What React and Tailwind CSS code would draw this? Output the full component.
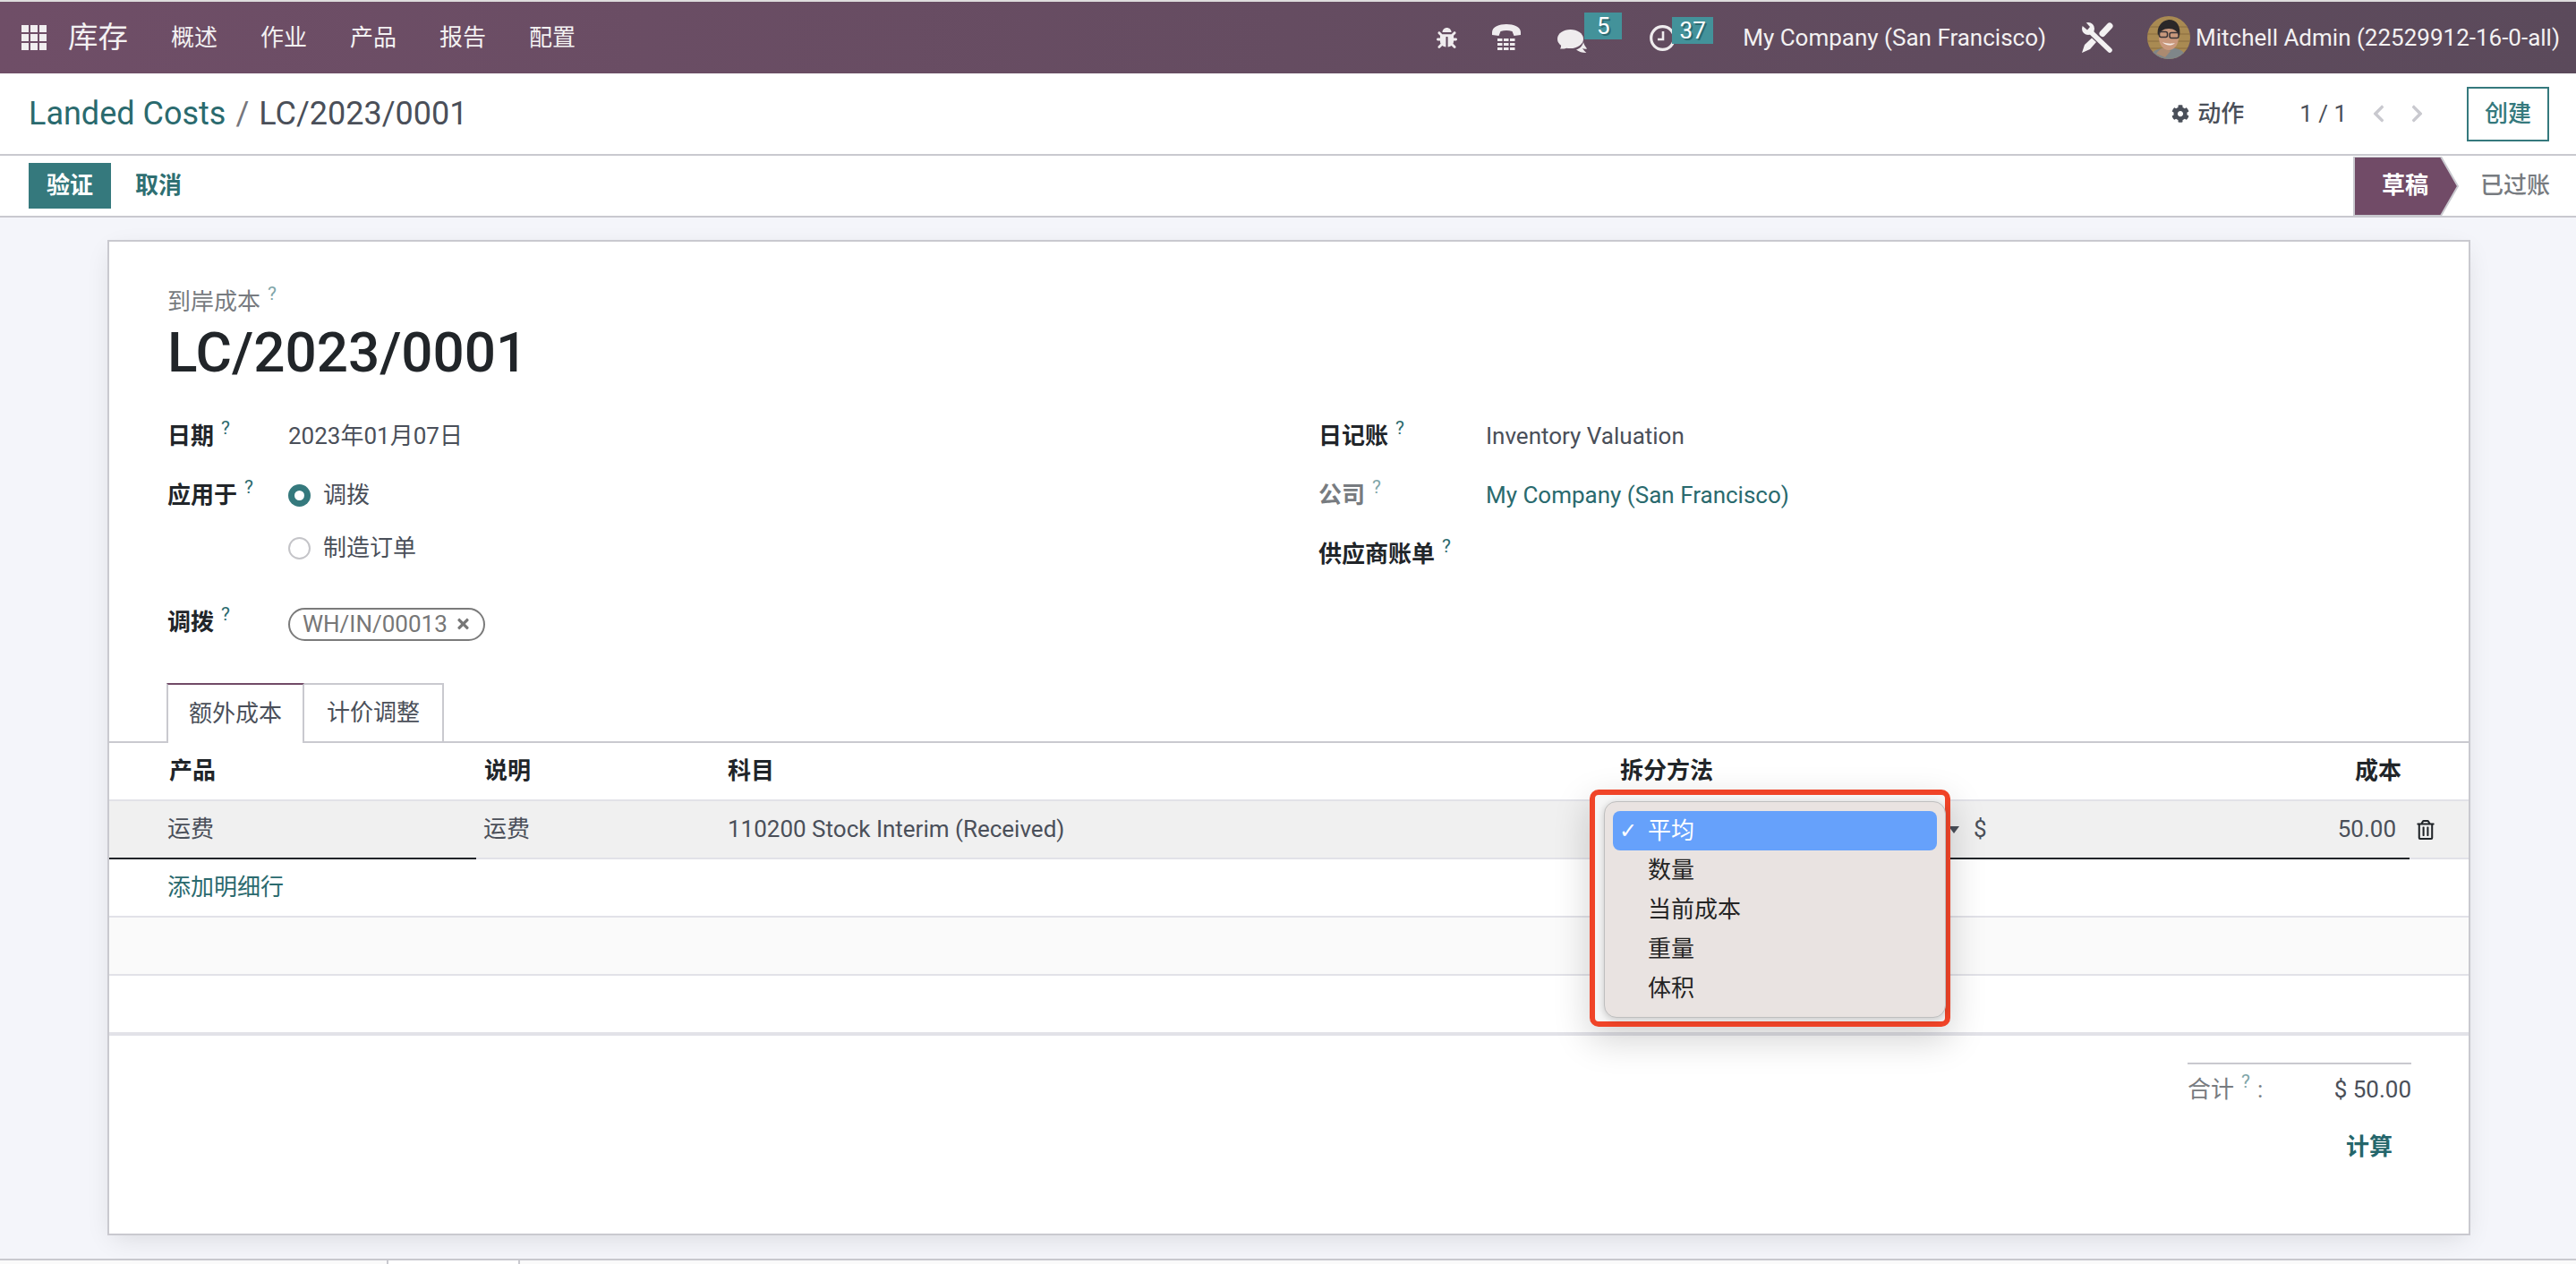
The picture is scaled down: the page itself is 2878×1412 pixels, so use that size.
import React from "react";
import { FaBug, FaCog, FaChevronLeft, FaChevronRight, FaRegTrashAlt, FaTimes } from "react-icons/fa";

function Q({ muted }) {
  return (
    <span className={`ml-[8px] text-[21px] leading-[0] font-normal align-[11px] ${muted ? "text-[#7fa6a9]" : "text-[#2c6a6e]"}`}>?</span>
  );
}

function GridIcon() {
  const cells = [0, 10, 20];
  return (
    <svg width="28" height="28" viewBox="0 0 28 28" fill="#f1eef0">
      {cells.map((y) => cells.map((x) => <rect key={`${x}-${y}`} x={x} y={y} width="8" height="8" />))}
    </svg>
  );
}

function PhoneIcon() {
  const cols = [6, 13, 20];
  const rows = [16, 21, 26];
  return (
    <svg width="32" height="30" viewBox="0 0 32 30" fill="#efecee">
      <path d="M0 9C0 3 8 0 16 0C24 0 32 3 32 9L32 12L24.500 13L22.500 8C18 6.500 14 6.500 9.500 8L7.500 13L0 12Z" />
      {rows.map((y) => cols.map((x) => <rect key={`${x}-${y}`} x={x} y={y} width="5.500" height="3" />))}
    </svg>
  );
}

function ChatIcon() {
  return (
    <svg width="33" height="26" viewBox="0 0 33 26" fill="#efecee">
      <path d="M29 14C30 18 31.500 19 33 21.500C31 22 29.500 21.500 28 21C31 25.500 33 26 32 26C28 26 24 25 21 22.500C25 21.500 28 18 29 14Z" />
      <ellipse cx="14.500" cy="10.500" rx="14.500" ry="10.500" />
      <path d="M4 17L11 20.500C9 21.500 6.500 21.500 3 21.500C4 20 4 19 4 17Z" />
    </svg>
  );
}

function ClockIcon() {
  return (
    <svg width="29" height="29" viewBox="0 0 29 29" fill="none" stroke="#efecee" strokeWidth="3.200">
      <circle cx="14.500" cy="14.500" r="12.800" />
      <path d="M15 7V16H9" strokeWidth="2.600" />
    </svg>
  );
}

function ToolsIcon() {
  return (
    <svg width="35" height="34" viewBox="0 0 35 34" fill="#f3f1f2">
      <path d="M8 9L31 31" stroke="#f3f1f2" strokeWidth="5.500" strokeLinecap="round" />
      <circle cx="7" cy="7" r="7" />
      <path d="M0 0H4.500L9 5L6 8.500L0 3.500Z" fill="#5f4b5c" />
      <path d="M31 4L23 12.500" stroke="#f3f1f2" strokeWidth="7" strokeLinecap="round" />
      <path d="M0 34L3 25L11 17.500L16 22L9 30Z" />
    </svg>
  );
}

function Avatar() {
  return (
    <svg width="48" height="48" viewBox="0 0 48 48" className="rounded-full shrink-0">
      <rect width="48" height="48" fill="#a98a52" />
      <path d="M0 12H48M0 20H48M0 28H48M0 36H48" stroke="#8a6d3f" strokeWidth="1" />
      <path d="M2 48C4 38 14 35 24 36C34 35 42 38 44 48Z" fill="#7f8689" />
      <path d="M10 42C14 36 18 35 20 35L26 39L20 46Z" fill="#ab8a70" />
      <ellipse cx="24" cy="24" rx="11" ry="14" fill="#c9987c" />
      <path d="M12 22C10 12 16 5 24 4C33 4 38 11 36 23C34 17 30 14 24 14C18 14 14 17 12 22Z" fill="#2a2728" />
      <rect x="13.500" y="17.500" width="9" height="6" rx="2" fill="none" stroke="#3a3436" strokeWidth="1.500" />
      <rect x="25" y="18.500" width="10" height="6" rx="2" fill="none" stroke="#3a3436" strokeWidth="1.500" />
      <path d="M17 29C20 33 27 34 31 30C28 31 21 31 17 29Z" fill="#f5ece6" />
    </svg>
  );
}

function Label({ children, q, muted }) {
  return (
    <span className={`leading-[34px] ${muted ? "text-[#777b80]" : "text-[#212529]"} font-semibold`}>
      {children}
      <Q muted={muted} />
    </span>
  );
}

function Radio({ on, children }) {
  return (
    <div className="flex items-center h-full text-[#4a4f59]">
      <span className={`w-[25px] h-[25px] rounded-full shrink-0 flex items-center justify-center ${on ? "bg-[#35797d]" : "border-2 border-[#c4c4c8] bg-white"}`}>
        {on && <span className="w-[11px] h-[11px] rounded-full bg-white" />}
      </span>
      <span className="ml-[14px]">{children}</span>
    </div>
  );
}

const splitMethods = ["平均", "数量", "当前成本", "重量", "体积"];

export default function App() {
  const menus = ["概述", "作业", "产品", "报告", "配置"];
  return (
    <div className="w-[2878px] h-[1412px] overflow-hidden flex flex-col bg-[#f4f5fa] text-[26px] text-[#4a4f59] antialiased [font-family:Roboto,'Noto_Sans_CJK_SC',sans-serif]">
      <div className="h-[2px] bg-[#dedddd] shrink-0" />
      <nav className="h-[80px] shrink-0 flex items-center bg-gradient-to-r from-[#6f4e67] to-[#5b4a5b] text-[#f3f1f2]">
        <div className="ml-[24px]"><GridIcon /></div>
        <span className="ml-[24px] mr-[24px] text-[33.500px]">库存</span>
        {menus.map((m) => (
          <span key={m} className="px-[24px]">{m}</span>
        ))}
        <div className="ml-auto flex items-center pr-[18px]">
          <FaBug className="w-[23px] h-[23px] text-[#efecee]" />
          <span className="ml-[39px]"><PhoneIcon /></span>
          <span className="ml-[41px] relative flex mt-[7px]">
            <ChatIcon />
            <span className="absolute left-[30px] top-[-19px] w-[42px] h-[30px] bg-[#43929a] text-white text-center leading-[30px] [text-shadow:2px_2px_0_#2c6a70]">5</span>
          </span>
          <span className="ml-[70px] relative flex">
            <ClockIcon />
            <span className="absolute left-[25px] top-[-9px] w-[46px] h-[30px] bg-[#43929a] text-white text-center leading-[30px] [text-shadow:2px_2px_0_#2c6a70]">37</span>
          </span>
          <span className="ml-[75px]">My Company (San Francisco)</span>
          <span className="ml-[40px]"><ToolsIcon /></span>
          <span className="ml-[38px]"><Avatar /></span>
          <span className="ml-[6px]">Mitchell Admin (22529912-16-0-all)</span>
        </div>
      </nav>

      <header className="h-[92px] shrink-0 bg-white border-b-2 border-[#c9c9cf] flex items-center pl-[32px] pr-[30px]">
        <div className="text-[36px] flex items-center">
          <span className="text-[#2a6a6e]">Landed Costs</span>
          <span className="text-[#77777d] mx-[11px]">/</span>
          <span>LC/2023/0001</span>
        </div>
        <div className="ml-auto flex items-center">
          <FaCog className="w-[20px] h-[20px]" />
          <span className="ml-[9px] font-medium">动作</span>
          <span className="ml-[62px]">1 / 1</span>
          <FaChevronLeft className="ml-[28px] w-[15px] h-[22px] text-[#c9c9cf]" />
          <FaChevronRight className="ml-[28px] w-[15px] h-[22px] text-[#c9c9cf]" />
          <button className="ml-[48px] w-[92px] h-[61px] border-2 border-[#35797d] text-[#35797d] font-medium">创建</button>
        </div>
      </header>

      <div className="h-[69px] shrink-0 bg-white border-b-2 border-[#c9c9cf] flex items-center pl-[32px]">
        <button className="w-[92px] h-[51px] bg-[#35797d] text-white font-semibold">验证</button>
        <button className="ml-[27px] text-[#2f6f72] font-semibold">取消</button>
        <div className="ml-auto flex items-stretch h-full">
          <div className="relative w-[118px] flex items-center pl-[32px] text-white font-semibold">
            <svg className="absolute left-0 top-[1px]" width="118" height="66" viewBox="0 0 118 66">
              <polygon points="1,0 98,0 117,33 98,66 1,66" fill="#714b67" stroke="#c9c9cf" strokeWidth="2" />
            </svg>
            <span className="relative">草稿</span>
          </div>
          <div className="flex items-center pl-[24px] pr-[29px] text-[#777b80] font-medium">已过账</div>
        </div>
      </div>

      <main className="flex-1 min-h-0 pt-[25px] pl-[120px]">
        <div className="relative w-[2640px] h-[1112px] bg-white border-2 border-[#c9c9cf] shadow-[0_8px_28px_-6px_rgba(0,0,0,0.12)] flex flex-col">
          <div className="pl-[65px] pt-[50px] h-[184px] shrink-0">
            <div className="h-[34px] leading-[34px] text-[#777b80]">
              到岸成本
              <Q muted />
            </div>
            <h1 className="h-[80px] leading-[80px] text-[62px] font-medium text-[#212529]">LC/2023/0001</h1>
          </div>

          <div className="flex pl-[65px] h-[274px] shrink-0">
            <div className="w-[1286px] shrink-0 flex flex-col">
              <div className="h-[66px] flex items-center">
                <div className="w-[135px]"><Label>日期</Label></div>
                <span>2023年01月07日</span>
              </div>
              <div className="h-[66px] flex items-center">
                <div className="w-[135px]"><Label>应用于</Label></div>
                <Radio on>调拨</Radio>
              </div>
              <div className="h-[52px] flex items-center">
                <div className="w-[135px]" />
                <Radio>制造订单</Radio>
              </div>
              <div className="h-[24px]" />
              <div className="h-[66px] flex items-center">
                <div className="w-[135px]"><Label>调拨</Label></div>
                <span className="h-[37px] px-[14px] flex items-center rounded-full border-2 border-[#7b7b7b] text-[#777777] text-[26px] mt-[4px]">
                  WH/IN/00013
                  <FaTimes className="ml-[9px] w-[17px] h-[18px]" />
                </span>
              </div>
            </div>
            <div className="flex flex-col">
              <div className="h-[66px] flex items-center">
                <div className="w-[187px]"><Label>日记账</Label></div>
                <span>Inventory Valuation</span>
              </div>
              <div className="h-[66px] flex items-center">
                <div className="w-[187px]"><Label muted>公司</Label></div>
                <span className="text-[#2a6a6e]">My Company (San Francisco)</span>
              </div>
              <div className="h-[66px] flex items-center">
                <div className="w-[187px]"><Label>供应商账单</Label></div>
              </div>
            </div>
          </div>

          <div className="mt-[35px] h-[67px] shrink-0 border-b-2 border-[#c9c9cf] pl-[64px] flex items-stretch">
            <div className="w-[154px] h-[67px] border-t-2 border-t-[#714b67] border-x-2 border-x-[#c9c9cf] bg-white flex items-center justify-center">额外成本</div>
            <div className="w-[156px] h-[65px] border-t-2 border-r-2 border-[#c9c9cf] flex items-center justify-center">计价调整</div>
          </div>

          <div className="grid grid-cols-[410px_273px_995px_390px_502px_66px] h-[65px] shrink-0 font-semibold text-[#212529] border-b-2 border-[#e2e2e8] items-center">
            <span className="pl-[67px]">产品</span>
            <span className="pl-[9px]">说明</span>
            <span className="pl-[8px]">科目</span>
            <span className="pl-[10px]">拆分方法</span>
            <span className="pr-[9px] text-right">成本</span>
            <span />
          </div>

          <div className="grid grid-cols-[410px_273px_995px_390px_502px_66px] h-[65px] shrink-0 bg-[#f0f0f0]">
            <div className="pl-[65px] flex items-center border-b-2 border-[#212529]">运费</div>
            <div className="pl-[8px] flex items-center border-b-2 border-[#e2e2e8]">运费</div>
            <div className="pl-[8px] flex items-center border-b-2 border-[#e2e2e8]">110200 Stock Interim (Received)</div>
            <div className="flex items-center justify-end pr-[1px] border-b-2 border-[#212529]">
              <span className="w-0 h-0 border-x-[6px] border-x-transparent border-t-[8px] border-t-[#4a4f59]" />
            </div>
            <div className="flex items-center justify-between px-[15px] border-b-2 border-[#212529]">
              <span>$</span>
              <span>50.00</span>
            </div>
            <div className="pl-[8px] flex items-center border-b-2 border-[#e2e2e8]">
              <FaRegTrashAlt className="w-[20px] h-[22px] text-[#212529]" />
            </div>
          </div>

          <div className="h-[65px] shrink-0 border-b-2 border-[#e2e2e8] pl-[65px] flex items-center text-[#2a6a6e]">添加明细行</div>
          <div className="h-[65px] shrink-0 border-b-2 border-[#e2e2e8] bg-[#fafafa]" />
          <div className="h-[67px] shrink-0 border-b-4 border-[#e2e2e8]" />

          <div className="pt-[30px] pr-[64px] flex flex-col items-end">
            <div className="w-[250px] border-t-2 border-[#c9c9cf] h-[58px] flex items-center justify-between">
              <span className="text-[#777b80] leading-[34px]">
                合计
                <Q muted />
                <span className="ml-[8px]">:</span>
              </span>
              <span>$ 50.00</span>
            </div>
            <button className="mt-[11px] mr-[21px] h-[50px] text-[#24666b] font-semibold">计算</button>
          </div>

          <div className="absolute left-[1654px] top-[612px] w-[403px] h-[265px] border-[6px] border-[#f04428] rounded-[10px] pl-[10px] pt-[7px] bg-[#f6f6f6] shadow-[0_14px_40px_rgba(0,0,0,0.18)]">
            <div className="w-[382px] h-[242px] bg-[#e9e3e1] rounded-[14px] border border-[#bfbfbf] pt-[10px] pl-[9px] shadow-[0_2px_8px_rgba(0,0,0,0.2)] text-[#242424]">
              {splitMethods.map((m, i) => (
                <div key={m} className={`w-[362px] h-[44px] flex items-center rounded-[8px] ${i === 0 ? "bg-[#66a1fb] text-white" : ""}`}>
                  <span className="w-[39px] pl-[7px] text-[24px] [font-family:'DejaVu_Sans',sans-serif]">{i === 0 ? "✓" : ""}</span>
                  <span>{m}</span>
                </div>
              ))}
            </div>
          </div>
        </div>
      </main>

      <footer className="h-[6px] shrink-0 border-t-2 border-[#c9c9cf] bg-[#fafafa] pl-[432px] flex">
        <div className="w-[149px] h-full border-x-2 border-[#c9c9cf] bg-white" />
      </footer>
    </div>
  );
}
